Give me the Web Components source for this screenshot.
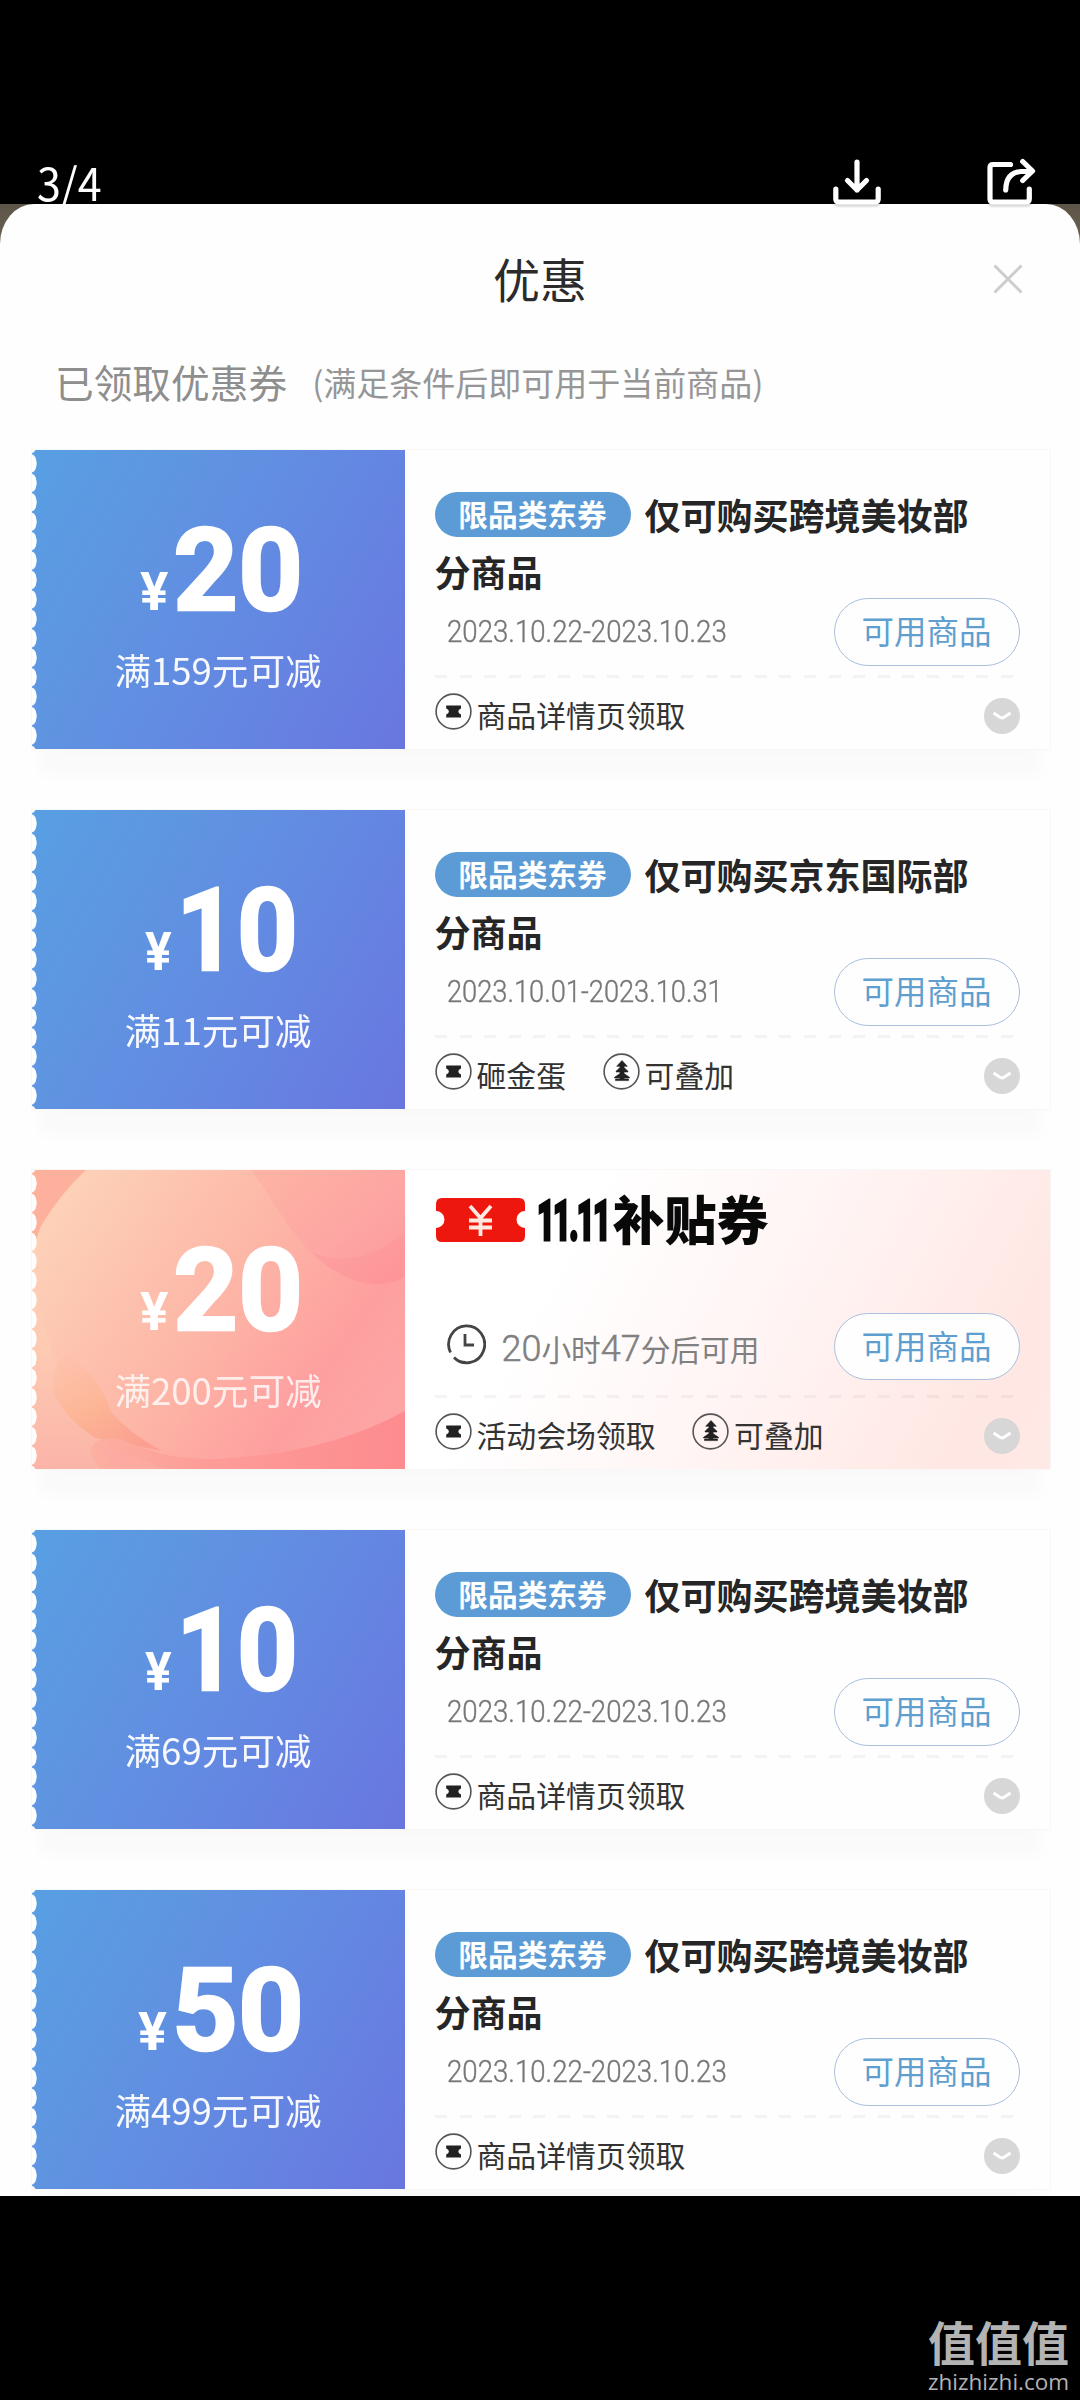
<!DOCTYPE html>
<html lang="zh-CN">
<head>
<meta charset="utf-8">
<title>优惠</title>
<style>
html,body{margin:0;background:#000}
body{width:1080px;height:2400px;overflow:hidden;font-family:"Noto Sans CJK SC","Noto Sans",sans-serif}
</style>
</head>
<body>
<coupon-viewer>
  <coupon-card amount="20" aw="159" cond="满159元可减" line1="仅可购买跨境美妆部" line2="分商品" date="2023.10.22-2023.10.23" dw="280"><tag-item kind="ticket">商品详情页领取</tag-item></coupon-card>
  <coupon-card amount="10" aw="149" cond="满11元可减" line1="仅可购买京东国际部" line2="分商品" date="2023.10.01-2023.10.31" dw="276"><tag-item kind="ticket">砸金蛋</tag-item><tag-item kind="stack">可叠加</tag-item></coupon-card>
  <coupon-card special amount="20" aw="159" cond="满200元可减"><tag-item kind="ticket">活动会场领取</tag-item><tag-item kind="stack">可叠加</tag-item></coupon-card>
  <coupon-card amount="10" aw="149" cond="满69元可减" line1="仅可购买跨境美妆部" line2="分商品" date="2023.10.22-2023.10.23" dw="280"><tag-item kind="ticket">商品详情页领取</tag-item></coupon-card>
  <coupon-card amount="50" aw="162" cond="满499元可减" line1="仅可购买跨境美妆部" line2="分商品" date="2023.10.22-2023.10.23" dw="280"><tag-item kind="ticket">商品详情页领取</tag-item></coupon-card>
</coupon-viewer>
<script>
// Text squeezed or stretched horizontally to an exact width.
class FitText extends HTMLElement{
  constructor(){
    super();
    this.attachShadow({mode:'open'}).innerHTML=`<style>
      :host{display:block;white-space:nowrap}
      span{display:inline-block;transform-origin:0 50%}
    </style><span><slot></slot></span>`;
  }
  connectedCallback(){
    const w=+this.getAttribute('w'),s=this.shadowRoot.querySelector('span');
    this.style.width=w+'px';
    const natural=s.offsetWidth;
    if(natural)s.style.transform=`scaleX(${w/natural})`;
  }
}

class TagItem extends HTMLElement{
  connectedCallback(){
    const glyph=this.getAttribute('kind')==='ticket'
      ?'<path d="M11.200 12.500H26V15.500Q23.300 16.500 23.300 18.500T26 21.500V24.500H11.200V21.500Q13.900 20.500 13.900 18.500T11.200 15.500Z"/>'
      :'<path d="M19 7.500L24.300 13.300H21V14.500L25 18.300V19H21V20.500L26.500 24.300V25H21V26H25.500V27.600H12.500V26H17V25H11.500V24.300L17 20.500V19H13V18.300L17 14.500V13.300H13.700Z" stroke="#222" stroke-width=".6"/>';
    this.attachShadow({mode:'open'}).innerHTML=`<style>
      :host{display:flex;align-items:center;gap:6px;font-size:29.850px;line-height:40px;color:#333;white-space:nowrap}
      svg{width:37px;height:37px;flex:none;margin-top:-5px}
      span{margin-left:-1px}
    </style>
    <svg viewBox="0 0 37 37" fill="#222"><circle cx="18.500" cy="18.500" r="17.400" fill="none" stroke="#555" stroke-width="1.600"/>${glyph}</svg><span><slot></slot></span>`;
  }
}

class CouponStub extends HTMLElement{
  connectedCallback(){
    const g=n=>this.getAttribute(n),pink=this.hasAttribute('pink');
    const art=`<svg class="art" viewBox="0 0 373 299" preserveAspectRatio="none">
      <defs>
        <linearGradient id="a" x1="0" y1=".2" x2="1" y2=".75"><stop offset="0" stop-color="#fdd2b8"/><stop offset=".5" stop-color="#fdb5a6"/><stop offset=".8" stop-color="#fe9f9f"/><stop offset="1" stop-color="#fda5a5"/></linearGradient>
        <linearGradient id="b" x1="0" y1="0" x2="1" y2="0"><stop offset="0" stop-color="#fcb0a0"/><stop offset=".35" stop-color="#fd9d98"/><stop offset="1" stop-color="#fd8b8f"/></linearGradient>
        <linearGradient id="c" x1="0" y1="0" x2="1" y2="1"><stop offset="0" stop-color="#fdae9f" stop-opacity=".75"/><stop offset=".6" stop-color="#fda4a4"/><stop offset="1" stop-color="#fd9498"/></linearGradient>
        <linearGradient id="d" x1="0" y1="0" x2=".7" y2="1"><stop offset="0" stop-color="#fdc0a6" stop-opacity=".3"/><stop offset=".55" stop-color="#fdb595"/><stop offset="1" stop-color="#fb9f90"/></linearGradient>
        <linearGradient id="e" x1="0" y1="0" x2="0" y2="1"><stop offset="0" stop-color="#fdd0b6" stop-opacity="0"/><stop offset=".5" stop-color="#fdcab2"/><stop offset="1" stop-color="#fbb4a8"/></linearGradient>
      </defs>
      <rect width="373" height="299" fill="url(#a)"/>
      <path d="M0 0H54Q28 24 9 56L0 80Z" fill="#fdb09b"/>
      <path d="M219 0C243 30 256 65 290 92Q335 128 373 107V0Z" fill="url(#c)" opacity=".75"/>
      <path d="M280 83Q330 100 373 62V107Q335 126 290 92Z" fill="#ff8d95" opacity=".3"/>
      <path d="M0 60Q8 200 60 260L64 299H0Z" fill="url(#e)"/>
      <path d="M33 184Q18 200 22 224Q36 252 64 268L130 281Q95 262 78 240Q68 206 33 184Z" fill="url(#d)"/>
      <path d="M60 276Q66 266 88 269Q120 282 140 286Q170 291 200 288Q300 281 373 241V299H68Q56 286 60 276Z" fill="url(#b)"/>
      <path d="M66 274Q96 283 132 299H90Q72 290 66 274Z" fill="#fdaba2" opacity=".8"/>
    </svg>`;
    this.attachShadow({mode:'open'}).innerHTML=`<style>
      :host{display:grid;width:373px;height:299px;flex:none;color:#fff;overflow:hidden;
        -webkit-mask:radial-gradient(ellipse 4.800px 9.200px at 0 50%,transparent 90%,#000 102%) 0 3.700px/100% 19.450px repeat-y;
        mask:radial-gradient(ellipse 4.800px 9.200px at 0 50%,transparent 90%,#000 102%) 0 3.700px/100% 19.450px repeat-y;
        background:linear-gradient(120deg,#589fe3 0%,#5f94e1 32%,#6486e2 65%,#6976df 100%)}
      :host([pink]){background:#fda}
      .art,.body{grid-area:1/1}
      .art{width:373px;height:299px}
      .body{display:flex;flex-direction:column;align-items:center;padding-top:61px;z-index:1}
      .sum{font-family:Roboto,sans-serif;font-weight:700;line-height:120px;height:120px;padding-left:6px}
      small{font-size:54px;font-family:Roboto,sans-serif;margin-right:5px}
      big{font-size:115px;-webkit-text-stroke:2.600px #fff}
      .cond{font-size:36.600px;line-height:50px;margin-top:14px;opacity:${pink?.8:.95};white-space:nowrap}
    </style>${pink?art:''}
    <div class="body"><div class="sum"><fit-text w="${+g('aw')+4}"><small>¥</small><big>${g('amount')}</big></fit-text></div><div class="cond">${g('cond')}</div></div>`;
  }
}

class CouponCard extends HTMLElement{
  connectedCallback(){
    const g=n=>this.getAttribute(n),sp=this.hasAttribute('special');
    const head=sp
      ?`<div class="logo"><svg width="91" height="46" viewBox="0 0 91 46"><path d="M7 1H84Q90 1 90 7V14A8.500 8.500 0 0 0 90 31V39Q90 45 84 45H7Q1 45 1 39V31A8.500 8.500 0 0 0 1 14V7Q1 1 7 1Z" fill="#ee170e"/><g fill="none" stroke="#ffe9e0" stroke-width="3.800"><path d="M35 9L45.500 21L56 9M45.500 20V39M34 23.500H57M34 30.500H57"/></g></svg><fit-text class="n" w="72">11.11</fit-text><span class="s">补贴券</span></div>`
      :`<div class="title"><div class="l1"><span class="badge">限品类东券</span><span>${g('line1')}</span></div><div class="l2">${g('line2')}</div></div>`;
    const when=sp
      ?`<div class="when"><svg width="40" height="42" viewBox="0 0 40 42" fill="none" stroke="#444" stroke-width="2.800"><path d="M4.500 29.500A18 18.500 0 1 1 8 34.500M8 34.500Q13 39.500 20 39.500"/><path d="M19 11V22H28"/></svg><span class="left"><b>20</b>小时<b>47</b>分后可用</span></div>`
      :`<fit-text class="date" w="${g('dw')}">${g('date')}</fit-text>`;
    this.attachShadow({mode:'open'}).innerHTML=`<style>
      :host{display:flex;width:1018px;height:299px;background:#fefefe;box-shadow:0 0 0 1px #f7f7f7,0 34px 16px -8px rgba(0,0,0,.02)}
      .info{flex:1;display:flex;flex-direction:column;padding:37px 30px 0 30px;box-sizing:border-box;background:#fefefe}
      :host([special]) .info{background:linear-gradient(118deg,#fff 25%,#fff3f2 60%,#ffe7e3 88%,#ffe9e6 100%)}
      .title{height:111.500px;font-size:36px;font-weight:700;line-height:57px;color:#262626;white-space:nowrap}
      .l1{display:flex;align-items:center;gap:14px;height:57px;margin-top:-1px}
      .l2{height:57px}
      .badge{width:196px;height:45px;line-height:43px;border-radius:23px;background:#5c9bd6;color:#fff;font-size:29.700px;text-align:center}
      .logo{display:flex;height:106px;align-items:flex-start;color:#090909}
      .logo svg{margin-top:-10px;flex:none}
      .logo .n{margin-left:11px;font:900 55px/60px Roboto,sans-serif;margin-top:-16px;letter-spacing:-3px;-webkit-text-stroke:3px #090909}
      .logo .s{font-size:52px;font-weight:900;line-height:60px;margin-top:-19px;margin-left:4px;white-space:nowrap}
      .row{display:flex;height:67.500px;align-items:center;justify-content:space-between}
      .date{margin-left:12px;font:300 31px/40px Roboto,sans-serif;color:#777;-webkit-text-stroke:.4px #777}
      .when{display:flex;align-items:center;margin-left:11px;gap:16px}
      .when svg{margin-top:-5px}
      .left{font-size:29.700px;line-height:44px;color:#808080;white-space:nowrap;margin-top:5px}
      .left b{font:300 36px/44px Roboto,sans-serif;-webkit-text-stroke:.5px #808080}
      .btn{box-sizing:border-box;width:186px;height:67.500px;border:1.600px solid #a9bfdc;border-radius:34px;background:#fefefe;color:#5f9fd0;font-size:32.500px;line-height:62px;text-align:center;white-space:nowrap}
      .dash{height:3px;flex:none;margin-top:${sp?14.5:9}px;margin-bottom:1px;background:repeating-linear-gradient(90deg,rgba(0,0,0,.045) 0 12px,transparent 12px 24.600px)}
      .tags{display:flex;gap:36.500px;align-items:center;height:70px}
      .more{margin-left:auto;width:36px;height:36px;margin-top:4px}
    </style>
    <coupon-stub ${sp?'pink':''} amount="${g('amount')}" aw="${g('aw')}" cond="${g('cond')}"></coupon-stub>
    <div class="info">${head}
      <div class="row">${when}<div class="btn">可用商品</div></div>
      <div class="dash"></div>
      <div class="tags"><slot></slot><svg class="more" viewBox="0 0 36 36"><circle cx="18" cy="18" r="18" fill="#d7d7d7"/><path d="M9.500 15L16 19.200Q18 20.500 20 19.200L26.500 15" fill="none" stroke="#fff" stroke-width="3"/></svg></div>
    </div>`;
  }
}

class CouponViewer extends HTMLElement{
  connectedCallback(){
    this.attachShadow({mode:'open'}).innerHTML=`<style>
      :host{display:flex;flex-direction:column;width:1080px;height:2400px;background:#000}
      header{display:flex;height:204px;box-sizing:border-box;padding:153px 43px 0 37px;color:#fff;z-index:1;align-items:flex-start}
      .count{font-size:45px;line-height:60px;margin:-1px auto 0 0}
      header svg{overflow:visible;flex:none;fill:none;stroke:#fff;stroke-width:5.200;stroke-linecap:round;stroke-linejoin:round;filter:drop-shadow(0 2px 1px rgba(0,0,0,.18))}
      .share{margin-left:106px}
      .back{height:1992px;background:linear-gradient(#5d5547,#6b6253 40px,#fefefe 41px)}
      .sheet{height:1992px;box-sizing:border-box;background:#fefefe;border-radius:34px 34px 0 0/40px 40px 0 0;overflow:hidden}
      .top{display:grid;grid-template-columns:1fr auto 1fr;align-items:center;height:152px;padding:0 57px}
      h1{grid-column:2;margin:-5px 0 0;font-size:47px;font-weight:400;line-height:70px;color:#2b2b2b}
      .top svg{justify-self:end;margin-top:-3px}
      .sub{display:flex;align-items:center;height:52px;padding-left:55px;color:#8e8e8e;font-size:38.700px;line-height:52px;white-space:nowrap;margin-top:-1px;margin-bottom:1px}
      .sub span{font-size:33px;margin-left:25px;margin-top:2px;color:#969696}
      .list{display:flex;flex-direction:column;gap:61px;padding:41.600px 0 0 31.500px}
      footer{display:flex;flex-direction:column;align-items:flex-end;padding:121px 11px 0 0;color:#b3b3b3}
      .cn{font-size:47px;font-weight:700;line-height:48px;height:48px}
      .en{font:400 22.500px/22px "Open Sans","Noto Sans",sans-serif;margin-top:6px}
    </style>
    <header>
      <fit-text class="count" w="65">3/4</fit-text>
      <svg width="48" height="50" viewBox="833 153 48 50"><path d="M857 162V190M847.500 180.500L857 190L866.500 180.500M835.800 189V199Q835.800 202 839 202H875Q878.200 202 878.200 199V189"/></svg>
      <svg class="share" width="50" height="50" viewBox="987 153 50 50"><path d="M1010.500 164.500H993Q990 164.500 990 167.500V199Q990 202 993 202H1026Q1029.300 202 1029.300 199V189M1005.700 190Q1006 172.500 1021 171.500H1031M1022.700 161.500L1032.500 171L1022.700 180.500"/></svg>
    </header>
    <div class="back"><div class="sheet">
      <div class="top"><h1>优惠</h1><svg width="30" height="30" viewBox="0 0 30 30"><path d="M1.500 1.500L28.500 28.500M28.500 1.500L1.500 28.500" stroke="#ccc" stroke-width="3" fill="none"/></svg></div>
      <div class="sub">已领取优惠券<span>(满足条件后即可用于当前商品)</span></div>
      <div class="list"><slot></slot></div>
    </div></div>
    <footer><div class="cn">值值值</div><fit-text class="en" w="141">zhizhizhi.com</fit-text></footer>`;
  }
}
customElements.define('fit-text',FitText);
customElements.define('tag-item',TagItem);
customElements.define('coupon-stub',CouponStub);
customElements.define('coupon-card',CouponCard);
customElements.define('coupon-viewer',CouponViewer);
</script>
</body>
</html>
